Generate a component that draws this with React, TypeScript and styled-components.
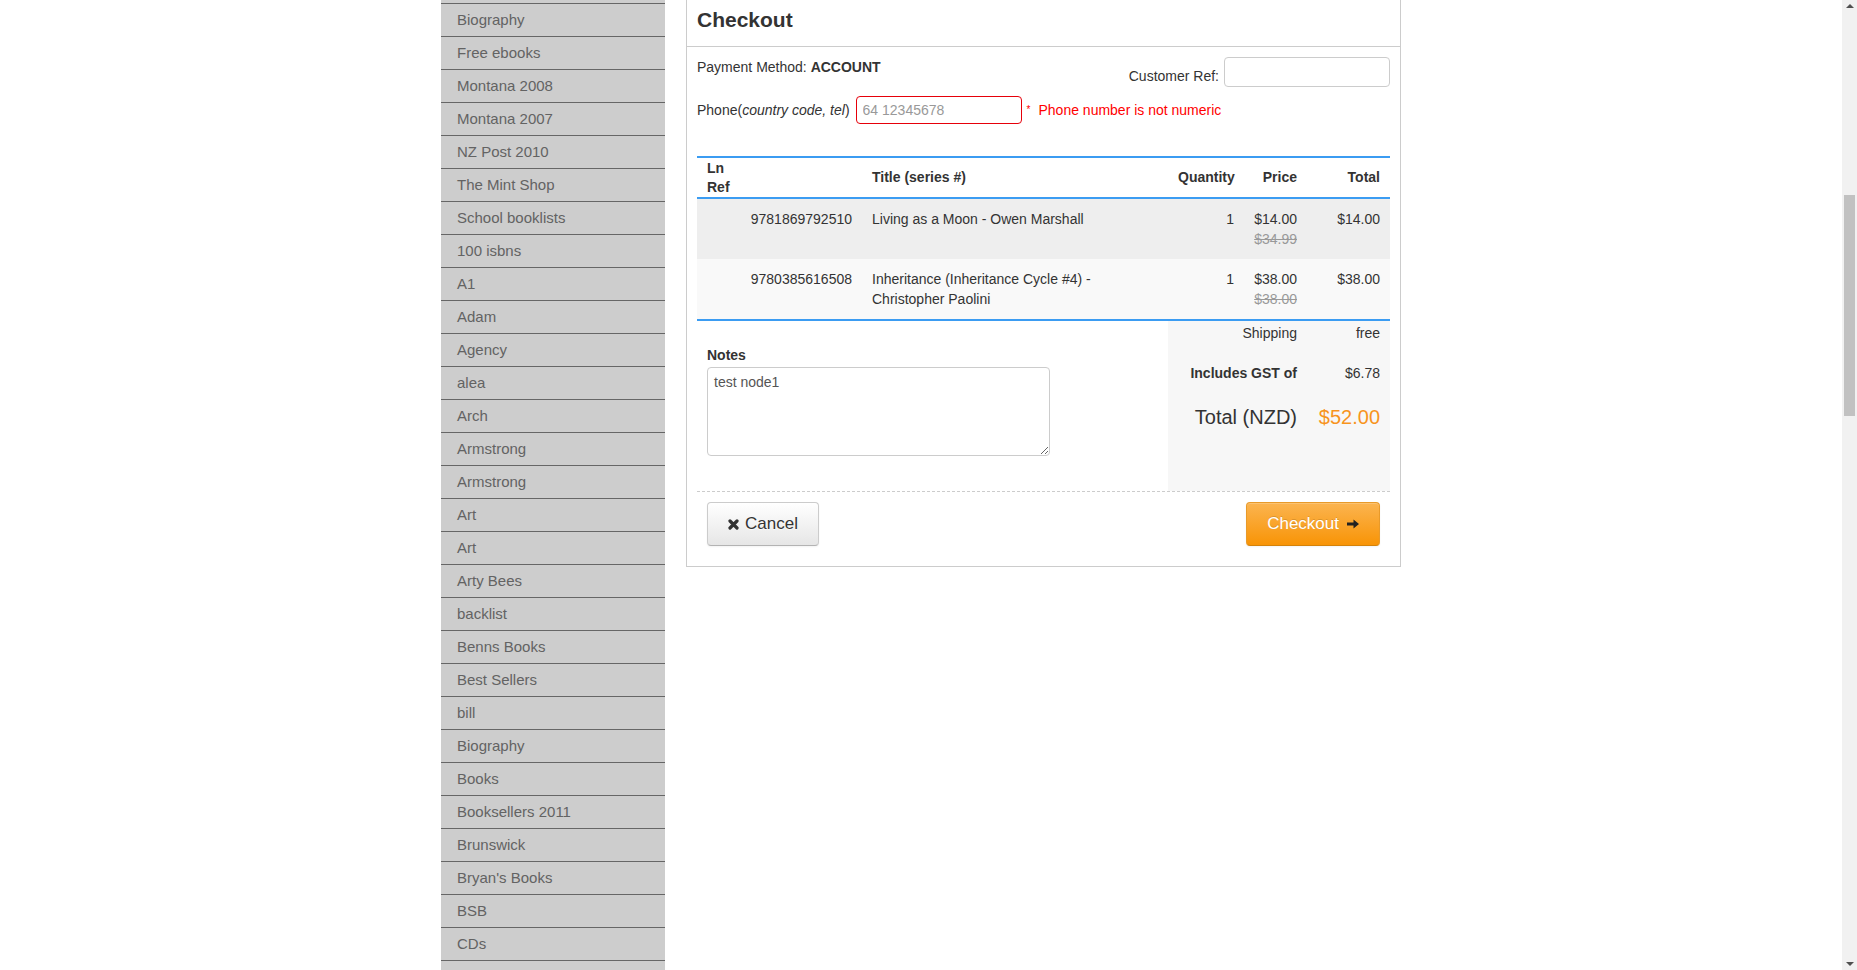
import React from "react";
import styled, { createGlobalStyle } from "styled-components";

const GlobalStyle = createGlobalStyle`
  html, body {
    margin: 0;
    height: 100%;
    overflow: hidden;
    background: #fff;
  }
  body {
    font-family: "Liberation Sans", Arial, Helvetica, sans-serif;
    font-size: 14px;
    line-height: 20px;
    color: #333;
  }
  * { box-sizing: border-box; }
`;

const BLUE = "#3b9cf2";

const Page = styled.div`
  margin-right: 15px;
`;

const Container = styled.div`
  width: 960px;
  margin: -29px auto 0;
  display: flex;
  align-items: flex-start;
  gap: 21px;
`;

const Sidebar = styled.nav`
  width: 224px;
  flex: none;
  background: #cdcdcd;
`;

const SideItem = styled.a`
  display: block;
  height: 33px;
  line-height: 32px;
  padding-left: 16px;
  border-bottom: 1px solid #666;
  color: #636363;
  font-size: 15px;
  text-decoration: none;
  white-space: nowrap;
`;

const Panel = styled.section`
  width: 715px;
  flex: none;
  margin-top: 22px;
  border: 1px solid #ccc;
  background: #fff;
`;

const PanelHeader = styled.header`
  padding: 14px 10px;
  border-bottom: 1px solid #ccc;
`;

const Title = styled.h2`
  margin: 0;
  font-size: 21px;
  line-height: 24px;
  font-weight: bold;
  color: #333;
`;

const PanelBody = styled.div`
  padding: 10px 10px 10px;
`;

const TopRow = styled.div`
  display: flex;
  justify-content: space-between;
  align-items: flex-start;
`;

const Text = styled.span<{ $pb?: number }>`
  line-height: 20px;
  padding-bottom: ${(p) => p.$pb || 0}px;
`;

const RefGroup = styled.label`
  display: flex;
  align-items: flex-end;
  gap: 5px;
`;

const TextInput = styled.input<{ $error?: boolean; $h: number }>`
  width: 166px;
  height: ${(p) => p.$h}px;
  border: 1px solid ${(p) => (p.$error ? "#e6000a" : "#ccc")};
  border-radius: 4px;
  padding: 4px 6px;
  font-family: "Liberation Sans", Arial, sans-serif;
  font-size: 14px;
  color: #555;
  background: #fff;
  outline: none;
  &::placeholder {
    color: #999;
  }
`;

const PhoneRow = styled.div`
  display: flex;
  align-items: center;
  margin-top: 9px;
  height: 28px;
`;

const PhoneLabel = styled.span`
  line-height: 20px;
  margin-right: 6px;
`;

const ErrorMsg = styled.span`
  display: flex;
  align-items: center;
  margin-left: 5px;
  color: #f00;
  line-height: 20px;
`;

const Star = styled.span`
  font-size: 10px;
  margin-right: 8px;
`;

const Table = styled.table`
  width: 100%;
  margin-top: 32px;
  border-collapse: separate;
  border-spacing: 0;
  table-layout: fixed;
`;

const Th = styled.th<{ $align?: string }>`
  padding: 0.5px 10px;
  line-height: 19px;
  font-weight: bold;
  text-align: ${(p) => p.$align || "left"};
  vertical-align: middle;
  border-top: 2px solid ${BLUE};
  border-bottom: 2px solid ${BLUE};
  color: #333;
`;

const Tr = styled.tr<{ $bg: string; $last?: boolean }>`
  background: ${(p) => p.$bg};
  & > td {
    border-bottom: ${(p) => (p.$last ? `2px solid ${BLUE}` : "0")};
  }
`;

const Td = styled.td<{ $align?: string }>`
  padding: 10px;
  line-height: 20px;
  vertical-align: top;
  text-align: ${(p) => p.$align || "left"};
  color: #333;
`;

const OldPrice = styled.span`
  display: block;
  color: #999;
  text-decoration: line-through;
`;

const BottomArea = styled.div`
  display: flex;
  align-items: stretch;
`;

const NotesCol = styled.div`
  flex: 1;
  padding: 24px 10px 35px;
`;

const NotesLabel = styled.label`
  display: block;
  font-weight: bold;
  line-height: 20px;
`;

const Notes = styled.textarea`
  display: block;
  margin-top: 2px;
  width: 343px;
  height: 89px;
  border: 1px solid #ccc;
  border-radius: 4px;
  padding: 4px 6px;
  font-family: "Liberation Sans", Arial, sans-serif;
  font-size: 14px;
  line-height: 20px;
  color: #555;
  outline: none;
`;

const Summary = styled.div`
  width: 222px;
  flex: none;
  background: #f7f7f7;
`;

const SummaryRow = styled.div<{ $mt: number; $big?: boolean }>`
  display: grid;
  grid-template-columns: 139px 83px;
  margin-top: ${(p) => p.$mt}px;
  font-size: ${(p) => (p.$big ? 20 : 14)}px;
  line-height: ${(p) => (p.$big ? 24 : 20)}px;
`;

const SumCell = styled.div<{ $bold?: boolean; $color?: string }>`
  text-align: right;
  padding-right: 10px;
  white-space: nowrap;
  font-weight: ${(p) => (p.$bold ? "bold" : "normal")};
  color: ${(p) => p.$color || "#333"};
`;

const Footer = styled.div`
  display: flex;
  justify-content: space-between;
  border-top: 1px dashed #ccc;
  padding: 10px 10px 10px;
`;

const Button = styled.button<{ $primary?: boolean }>`
  display: inline-flex;
  align-items: center;
  gap: ${(p) => (p.$primary ? 8 : 6)}px;
  height: 44px;
  padding: 0 20px;
  font-family: "Liberation Sans", Arial, sans-serif;
  font-size: 17px;
  border-radius: 4px;
  cursor: pointer;
  color: ${(p) => (p.$primary ? "#fff" : "#333")};
  text-shadow: ${(p) =>
    p.$primary ? "0 -1px 0 rgba(0,0,0,0.15)" : "0 1px 1px rgba(255,255,255,0.75)"};
  background: ${(p) =>
    p.$primary
      ? "linear-gradient(to bottom, #fbb450, #f89406)"
      : "linear-gradient(to bottom, #ffffff, #e6e6e6)"};
  border-width: 1px;
  border-style: solid;
  border-color: ${(p) =>
    p.$primary ? "#e89a2a #e89a2a #d4820a" : "#cccccc #cccccc #b3b3b3"};
  box-shadow: inset 0 1px 0 rgba(255, 255, 255, 0.2), 0 1px 2px rgba(0, 0, 0, 0.05);
`;

const ScrollTrack = styled.div`
  position: fixed;
  top: 0;
  right: 0;
  width: 15px;
  height: 100%;
  background: #f1f1f1;
`;

const ScrollThumb = styled.div`
  position: absolute;
  left: 2px;
  right: 2px;
  top: 195px;
  height: 221px;
  background: #c1c1c1;
`;

const ScrollArrow = styled.div<{ $down?: boolean }>`
  position: absolute;
  left: 4px;
  width: 0;
  height: 0;
  border-left: 4px solid transparent;
  border-right: 4px solid transparent;
  ${(p) =>
    p.$down
      ? "bottom: 4px; border-top: 4px solid #505050;"
      : "top: 4px; border-bottom: 4px solid #505050;"}
`;

const CrossIcon = () => (
  <svg width="11" height="11" viewBox="0 0 11 11" aria-hidden="true">
    <path d="M2 2 L9 9 M9 2 L2 9" stroke="#333" strokeWidth="3.2" strokeLinecap="round" />
  </svg>
);

const ArrowIcon = () => (
  <svg width="12" height="10" viewBox="0 0 12 10" aria-hidden="true">
    <path d="M0 3.5 H6.5 V0.5 L12 5 L6.5 9.5 V6.5 H0 Z" fill="#222" />
  </svg>
);

const sideItems = [
  "",
  "Biography",
  "Free ebooks",
  "Montana 2008",
  "Montana 2007",
  "NZ Post 2010",
  "The Mint Shop",
  "School booklists",
  "100 isbns",
  "A1",
  "Adam",
  "Agency",
  "alea",
  "Arch",
  "Armstrong",
  "Armstrong",
  "Art",
  "Art",
  "Arty Bees",
  "backlist",
  "Benns Books",
  "Best Sellers",
  "bill",
  "Biography",
  "Books",
  "Booksellers 2011",
  "Brunswick",
  "Bryan's Books",
  "BSB",
  "CDs",
  "",
];

const lines = [
  {
    ref: "9781869792510",
    title: "Living as a Moon - Owen Marshall",
    qty: 1,
    price: "$14.00",
    old: "$34.99",
    total: "$14.00",
  },
  {
    ref: "9780385616508",
    title: "Inheritance (Inheritance Cycle #4) - Christopher Paolini",
    qty: 1,
    price: "$38.00",
    old: "$38.00",
    total: "$38.00",
  },
];

export default function App() {
  return (
    <Page>
      <GlobalStyle />
      <Container>
        <Sidebar>
          {sideItems.map((s, i) => (
            <SideItem key={i} href="#">
              {s}
            </SideItem>
          ))}
        </Sidebar>
        <Panel>
          <PanelHeader>
            <Title>Checkout</Title>
          </PanelHeader>
          <PanelBody>
            <TopRow>
              <Text>
                Payment Method: <b>ACCOUNT</b>
              </Text>
              <RefGroup>
                <Text $pb={1}>Customer Ref:</Text>
                <TextInput $h={30} type="text" />
              </RefGroup>
            </TopRow>
            <PhoneRow>
              <PhoneLabel>
                Phone(<i>country code, tel</i>)
              </PhoneLabel>
              <TextInput $h={28} $error type="text" placeholder="64 12345678" />
              <ErrorMsg>
                <Star>*</Star>
                Phone number is not numeric
              </ErrorMsg>
            </PhoneRow>
            <Table>
              <colgroup>
                <col style={{ width: 165 }} />
                <col style={{ width: 306 }} />
                <col style={{ width: 76 }} />
                <col style={{ width: 63 }} />
                <col style={{ width: 83 }} />
              </colgroup>
              <thead>
                <tr>
                  <Th>
                    Ln
                    <br />
                    Ref
                  </Th>
                  <Th>Title (series #)</Th>
                  <Th $align="right">Quantity</Th>
                  <Th $align="right">Price</Th>
                  <Th $align="right">Total</Th>
                </tr>
              </thead>
              <tbody>
                {lines.map((l, i) => (
                  <Tr key={l.ref} $bg={i % 2 === 0 ? "#eeeeee" : "#f9f9f9"} $last={i === lines.length - 1}>
                    <Td $align="right">{l.ref}</Td>
                    <Td>{l.title}</Td>
                    <Td $align="right">{l.qty}</Td>
                    <Td $align="right">
                      {l.price}
                      <OldPrice>{l.old}</OldPrice>
                    </Td>
                    <Td $align="right">{l.total}</Td>
                  </Tr>
                ))}
              </tbody>
            </Table>
            <BottomArea>
              <NotesCol>
                <NotesLabel htmlFor="notes">Notes</NotesLabel>
                <Notes id="notes" defaultValue="test node1" />
              </NotesCol>
              <Summary>
                <SummaryRow $mt={2}>
                  <SumCell>Shipping</SumCell>
                  <SumCell>free</SumCell>
                </SummaryRow>
                <SummaryRow $mt={20}>
                  <SumCell $bold>Includes GST of</SumCell>
                  <SumCell>$6.78</SumCell>
                </SummaryRow>
                <SummaryRow $mt={22} $big>
                  <SumCell>Total (NZD)</SumCell>
                  <SumCell $color="#f7941d">$52.00</SumCell>
                </SummaryRow>
              </Summary>
            </BottomArea>
            <Footer>
              <Button type="button">
                <CrossIcon />
                Cancel
              </Button>
              <Button type="button" $primary>
                Checkout
                <ArrowIcon />
              </Button>
            </Footer>
          </PanelBody>
        </Panel>
      </Container>
      <ScrollTrack>
        <ScrollArrow />
        <ScrollThumb />
        <ScrollArrow $down />
      </ScrollTrack>
    </Page>
  );
}
